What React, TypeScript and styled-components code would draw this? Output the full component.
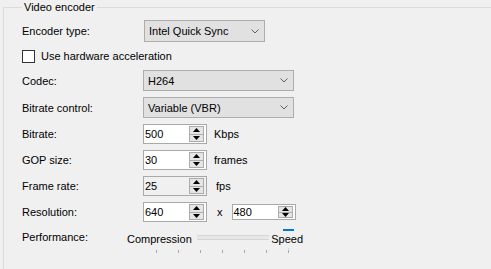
import React, { FC } from 'react'
import styled, { createGlobalStyle } from 'styled-components'

const GlobalStyle = createGlobalStyle`
  html, body {
    margin: 0;
    padding: 0;
    background: #f0f0f0;
    overflow: hidden;
  }
  body {
    font-family: "Liberation Sans", Arial, sans-serif;
    font-size: 11px;
    color: #000;
  }
`

const GroupBox = styled.fieldset`
  box-sizing: border-box;
  margin: 0 0 0 3px;
  padding: 6px 0 0 18px;
  height: 269px;
  border: 1px solid #dcdcdc;
  border-right: none;
  border-bottom: none;
  min-width: 0;
`

const Legend = styled.legend`
  margin-left: 0;
  padding: 0 2px;
  line-height: 14px;
`

const Form = styled.div`
  display: flex;
  flex-direction: column;
  gap: 6px;
`

const Row = styled.div<{ $label?: number; $h: number; $top?: boolean }>`
  display: grid;
  grid-template-columns: ${p => p.$label ?? 121}px auto;
  align-items: ${p => (p.$top ? 'start' : 'center')};
  height: ${p => p.$h}px;
`

const Label = styled.div<{ $pad?: number }>`
  white-space: nowrap;
  line-height: 14px;
  padding-top: ${p => p.$pad ?? 0}px;
`

const Controls = styled.div`
  display: flex;
  align-items: center;
  height: 100%;
`

const Combo = styled.div<{ $w: number; $shift?: number }>`
  box-sizing: border-box;
  display: flex;
  align-items: center;
  justify-content: space-between;
  width: ${p => p.$w}px;
  height: 100%;
  margin-left: ${p => p.$shift ?? 0}px;
  padding: 0 5px 0 4px;
  background: #e1e1e1;
  border: 1px solid #adadad;
`

const Chevron: FC = () => (
  <svg width="8" height="5" viewBox="0 0 8 5">
    <polyline points="0.5,0.5 4,4 7.5,0.5" fill="none" stroke="#606060" strokeWidth="1" />
  </svg>
)

const CheckRow = styled.label`
  display: flex;
  align-items: center;
  height: 16px;
`

const CheckBox = styled.span`
  box-sizing: border-box;
  width: 13px;
  height: 13px;
  background: #fff;
  border: 1px solid #333;
  margin-right: 6px;
`

const Spin = styled.div<{ $disabled?: boolean }>`
  box-sizing: border-box;
  display: flex;
  align-items: stretch;
  width: 64px;
  height: 100%;
  padding: 1px;
  background: ${p => (p.$disabled ? '#f0f0f0' : '#fff')};
  border: 1px solid #a9a9a9;
`

const SpinValue = styled.div`
  flex: 1;
  display: flex;
  align-items: center;
`

const SpinButtons = styled.div`
  display: flex;
  flex-direction: column;
  width: 15px;
  margin-right: 1px;
`

const SpinButton = styled.div<{ $down?: boolean }>`
  flex: 1;
  display: flex;
  align-items: center;
  justify-content: center;
  background: #e5e5e5;
  border: 1px solid #acacac;
  border-top-width: ${p => (p.$down ? 0 : 1)}px;
`

const Arrow: FC<{ down?: boolean }> = ({ down }) => (
  <svg width="7" height="4" viewBox="0 0 7 4">
    <polygon points={down ? '0,0 7,0 3.5,4' : '0,4 7,4 3.5,0'} fill="#000" />
  </svg>
)

const Unit = styled.span<{ $gap?: number }>`
  margin-left: ${p => p.$gap ?? 7}px;
  white-space: nowrap;
`

const SliderArea = styled.div`
  position: relative;
  width: 176px;
  padding-top: 3px;
`

const CaptionRow = styled.div`
  display: flex;
  align-items: flex-start;
  height: 15px;
`

const Caption = styled.span`
  position: relative;
  z-index: 1;
  line-height: 17px;
  background: #f0f0f0;
  white-space: nowrap;
`

const Track = styled.div`
  flex: 1;
  height: 3px;
  margin: 4px 2px 0 5px;
  background: #e7e7e7;
  border-top: 1px solid #d6d6d6;
  border-bottom: 1px solid #d6d6d6;
`

const Ticks = styled.div`
  display: flex;
  gap: 21px;
  margin: 4px 0 0 29px;
`

const Tick = styled.span`
  width: 1px;
  height: 3px;
  background: #a8a8a8;
`

const Thumb = styled.svg`
  position: absolute;
  left: 156px;
  top: 1px;
`

const SpinBox: FC<{ value: string; disabled?: boolean }> = ({ value, disabled }) => (
  <Spin $disabled={disabled}>
    <SpinValue>{value}</SpinValue>
    <SpinButtons>
      <SpinButton><Arrow /></SpinButton>
      <SpinButton $down><Arrow down /></SpinButton>
    </SpinButtons>
  </Spin>
)

const App: FC = () => (
  <>
    <GlobalStyle />
    <GroupBox>
      <Legend>Video encoder</Legend>
      <Form>
        <Row $h={22}>
          <Label>Encoder type:</Label>
          <Controls>
            <Combo $w={121} $shift={1}>Intel Quick Sync<Chevron /></Combo>
          </Controls>
        </Row>
        <CheckRow>
          <CheckBox />
          Use hardware acceleration
        </CheckRow>
        <Row $h={21}>
          <Label>Codec:</Label>
          <Controls>
            <Combo $w={151}>H264<Chevron /></Combo>
          </Controls>
        </Row>
        <Row $h={21}>
          <Label>Bitrate control:</Label>
          <Controls>
            <Combo $w={151}>Variable (VBR)<Chevron /></Combo>
          </Controls>
        </Row>
        <Row $h={20}>
          <Label>Bitrate:</Label>
          <Controls>
            <SpinBox value="500" />
            <Unit>Kbps</Unit>
          </Controls>
        </Row>
        <Row $h={20}>
          <Label>GOP size:</Label>
          <Controls>
            <SpinBox value="30" />
            <Unit>frames</Unit>
          </Controls>
        </Row>
        <Row $h={20}>
          <Label>Frame rate:</Label>
          <Controls>
            <SpinBox value="25" disabled />
            <Unit $gap={9}>fps</Unit>
          </Controls>
        </Row>
        <Row $h={20}>
          <Label>Resolution:</Label>
          <Controls>
            <SpinBox value="640" />
            <Unit $gap={10}>x</Unit>
            <Unit $gap={9}><SpinBox value="480" /></Unit>
          </Controls>
        </Row>
        <Row $h={30} $label={105} $top>
          <Label $pad={2}>Performance:</Label>
          <SliderArea>
            <CaptionRow>
              <Caption>Compression</Caption>
              <Track />
              <Caption>Speed</Caption>
            </CaptionRow>
            <Ticks>
              {Array.from({ length: 7 }).map((_, i) => <Tick key={i} />)}
            </Ticks>
            <Thumb width="11" height="20" viewBox="0 0 11 20">
              <polygon points="0,0 11,0 11,14 5.5,19.5 0,14" fill="#0078d7" />
            </Thumb>
          </SliderArea>
        </Row>
      </Form>
    </GroupBox>
  </>
)

export default App
